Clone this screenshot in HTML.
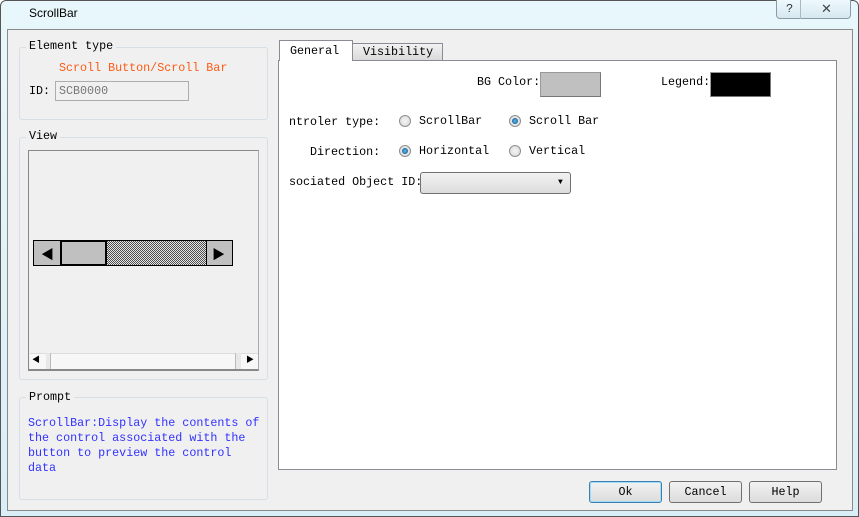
<!DOCTYPE html>
<html><head><style>
*{margin:0;padding:0;box-sizing:border-box}
body{width:859px;height:517px;background:#fff;position:relative;overflow:hidden;font-family:"Liberation Mono","Noto Sans CJK SC",monospace;font-size:11.7px;color:#000}
.a{position:absolute;white-space:nowrap}
#frame{left:0;top:0;width:859px;height:517px;border:1px solid #555;border-radius:6px 6px 0 0;background:linear-gradient(#e8f7fb,#d9eef6)}
#client{left:7px;top:29px;width:846px;height:482px;background:#f0f0f0;border:1px solid #8a8a8a}
.grp{position:absolute;border:1px solid #d5dfe5;border-radius:3px}
.lbl{position:absolute;background:#f0f0f0;padding:0 3px}
.btn{position:absolute;height:22px;border:1px solid #707070;border-radius:3px;background:linear-gradient(#f2f2f2,#dcdcdc);text-align:center;line-height:20px}
.radio{position:absolute;width:12px;height:12px;border-radius:50%;border:1px solid #8e8f8f;background:radial-gradient(#f4f4f4,#d8d8d8)}
.radio.on::after{content:"";position:absolute;left:2px;top:2px;width:6px;height:6px;border-radius:50%;background:radial-gradient(#5cc0f0,#0d3f78)}
</style></head><body>
<div class="a" id="frame"></div>
<div class="a" style="left:29px;top:6px;font-family:'Liberation Sans',sans-serif;font-size:12px">ScrollBar</div>
<div class="a" style="left:776px;top:0;width:75px;height:19px;border:1px solid #8a9aa6;border-top:none;border-radius:0 0 4px 4px;background:linear-gradient(#eef8fc,#d6e8f0)"></div>
<div class="a" style="left:800px;top:0;width:1px;height:19px;background:#a9b9c4"></div>
<div class="a" style="left:786px;top:2px;font-size:12px;color:#333">?</div>
<div class="a" style="left:821px;top:1px;font-size:13px;color:#444;font-family:'Liberation Sans',sans-serif">✕</div>
<div class="a" id="client"></div>

<div class="grp" style="left:19px;top:47px;width:249px;height:73px"></div>
<div class="lbl" style="left:26px;top:39px">Element type</div>
<div class="a" style="left:59px;top:61px;color:#ff5a14">Scroll Button/Scroll Bar</div>
<div class="a" style="left:29px;top:84px">ID:</div>
<div class="a" style="left:55px;top:81px;width:134px;height:20px;border:1px solid #adadad;background:#f0f0f0;color:#777;padding:2px 3px">SCB0000</div>

<div class="grp" style="left:19px;top:137px;width:249px;height:243px"></div>
<div class="lbl" style="left:26px;top:129px">View</div>
<div class="a" style="left:28px;top:150px;width:231px;height:221px;border:1px solid #888;border-right-color:#aaa;border-bottom:2px solid #888"></div>
<div class="a" style="left:33px;top:240px;width:200px;height:26px;border:1px solid #000;background:#c0c0c0"></div>
<div class="a" style="left:106px;top:241px;width:100px;height:24px;background:repeating-conic-gradient(#000 0 25%,#fff 0 50%) 0 0/2px 2px;opacity:.6"></div>
<div class="a" style="left:60px;top:240px;width:47px;height:26px;border:2px solid #000;background:#c0c0c0"></div>
<div class="a" style="left:206px;top:240px;width:1px;height:26px;background:#000"></div>
<div class="a" style="left:41px;top:244px;font-size:13px">◀</div>
<div class="a" style="left:212px;top:244px;font-size:13px">▶</div>
<div class="a" style="left:30px;top:353px;width:228px;height:16px;background:#f7f7f7;border-top:1px solid #ddd"></div>
<div class="a" style="left:32px;top:354px;font-size:8px">◀</div>
<div class="a" style="left:46px;top:353px;width:5px;height:16px;background:#e8e8e8;border-right:1px solid #bbb"></div>
<div class="a" style="left:235px;top:353px;width:6px;height:16px;background:#e8e8e8;border-left:1px solid #bbb"></div>
<div class="a" style="left:246px;top:354px;font-size:8px">▶</div>

<div class="grp" style="left:19px;top:397px;width:249px;height:103px"></div>
<div class="lbl" style="left:26px;top:390px">Prompt</div>
<div class="a" style="left:28px;top:416px;color:#3232ff;line-height:15px;white-space:normal;width:234px">ScrollBar:Display the contents of the control associated with the button to preview the control data</div>

<div class="a" style="left:278px;top:60px;width:559px;height:410px;background:#fff;border:1px solid #898c95"></div>
<div class="a" style="left:352px;top:43px;width:91px;height:18px;border:1px solid #898c95;background:linear-gradient(#f2f2f2,#dadada);padding-left:10px;line-height:16px">Visibility</div>
<div class="a" style="left:279px;top:40px;width:74px;height:21px;border:1px solid #898c95;border-bottom:none;background:#fff;padding-left:10px;line-height:20px">General</div>

<div class="a" style="left:477px;top:75px">BG Color:</div>
<div class="a" style="left:540px;top:72px;width:61px;height:25px;background:#c0c0c0;border:1px solid #999;border-right-color:#777;border-bottom-color:#777"></div>
<div class="a" style="left:661px;top:75px">Legend:</div>
<div class="a" style="left:710px;top:72px;width:61px;height:25px;background:#000;border:1px solid #999;border-right-color:#777;border-bottom-color:#777"></div>

<div class="a" style="left:289px;top:115px">ntroler type:</div>
<div class="radio" style="left:399px;top:115px"></div>
<div class="a" style="left:419px;top:114px">ScrollBar</div>
<div class="radio on" style="left:509px;top:115px"></div>
<div class="a" style="left:529px;top:114px">Scroll Bar</div>

<div class="a" style="left:310px;top:145px">Direction:</div>
<div class="radio on" style="left:399px;top:145px"></div>
<div class="a" style="left:419px;top:144px">Horizontal</div>
<div class="radio" style="left:509px;top:145px"></div>
<div class="a" style="left:529px;top:144px">Vertical</div>

<div class="a" style="left:289px;top:175px">sociated Object ID:</div>
<div class="a" style="left:420px;top:172px;width:151px;height:22px;border:1px solid #707070;border-radius:3px;background:linear-gradient(#f2f2f2,#dcdcdc)"></div>
<div class="a" style="left:558px;top:178px;font-size:8px">▼</div>

<div class="btn" style="left:589px;top:481px;width:73px;border-color:#3c7fb1;box-shadow:inset 0 0 0 1px #9fdcf8">Ok</div>
<div class="btn" style="left:669px;top:481px;width:73px">Cancel</div>
<div class="btn" style="left:749px;top:481px;width:73px">Help</div>
</body></html>
